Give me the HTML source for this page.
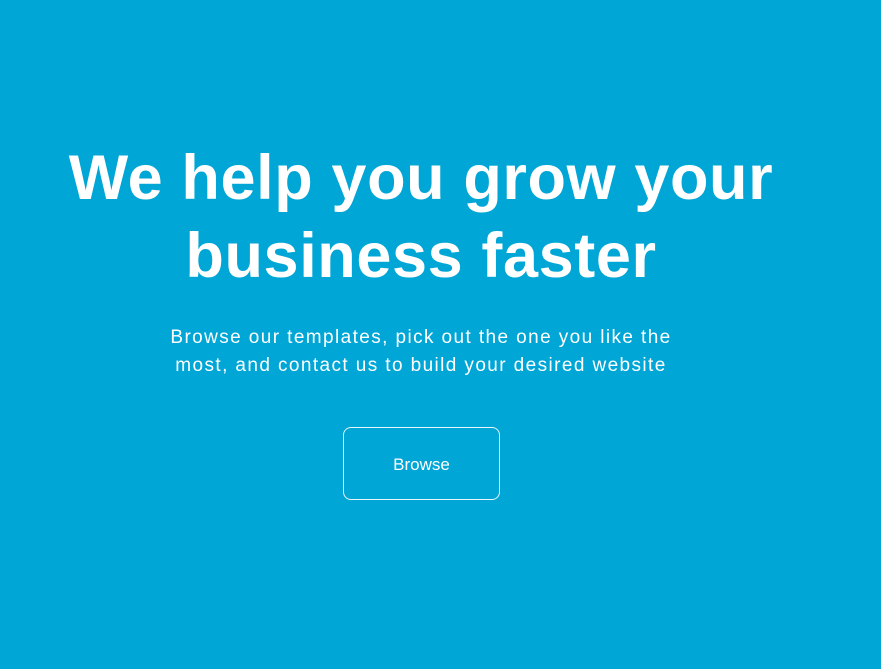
<!DOCTYPE html>
<html><head><style>
html,body{margin:0;width:881px;height:669px;background:#00a6d6;overflow:hidden;font-family:"Liberation Sans",sans-serif;color:#fff}
.h{position:absolute;left:0;width:842px;text-align:center;font-weight:bold;font-size:63px;line-height:78px;top:139px;letter-spacing:0.6px}
.p{position:absolute;left:0;width:842px;text-align:center;font-size:19px;line-height:28px;top:324px;letter-spacing:1.4px}
.b{position:absolute;left:343px;top:427px;width:155px;border:1px solid #e6f6fb;border-radius:8px;font-size:17px;display:flex;align-items:center;justify-content:center;padding-top:2px;box-sizing:content-box;height:69px}
</style></head><body>
<div class="h">We help you grow your<br>business faster</div>
<div class="p">Browse our templates, pick out the one you like the<br>most, and contact us to build your desired website</div>
<div class="b">Browse</div>
</body></html>
